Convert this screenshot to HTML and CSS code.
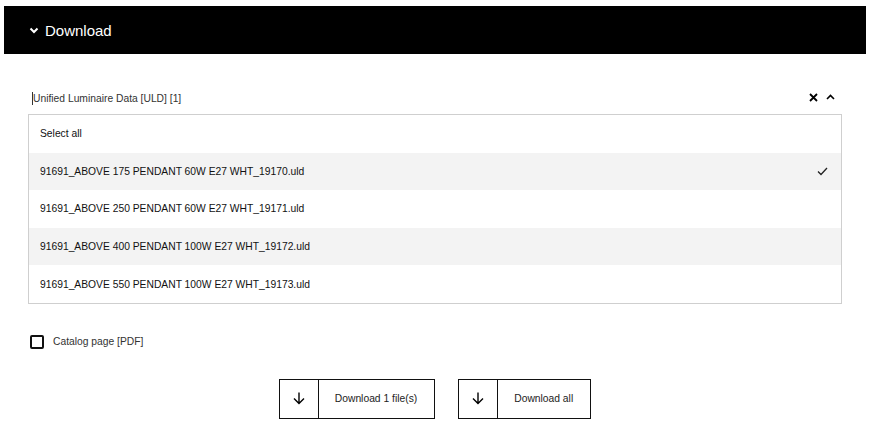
FILE: index.html
```html
<!DOCTYPE html>
<html lang="en">
  <head>
    <meta charset="UTF-8" />
    <title>Download</title>
    <link rel="stylesheet" href="styles.css">
  </head>
  <body>
    <div class="panel-head">
      <svg class="chev" width="10" height="7" viewBox="0 0 10 7"><path d="M1.5 1.5 L5 5 L8.5 1.5" fill="none" stroke="#fff" stroke-width="2"/></svg>
      Download
    </div>

    <div class="content">
      <div class="select-head">
        <span class="select-title"><span class="caret"></span>Unified Luminaire Data [ULD] [1]</span>
        <span class="select-icons">
          <svg width="9" height="9" viewBox="0 0 9 9"><path d="M1 1 L8 8 M8 1 L1 8" stroke="#000" stroke-width="1.8"/></svg>
          <svg width="9" height="6" viewBox="0 0 9 6"><path d="M1 5 L4.5 1.5 L8 5" fill="none" stroke="#000" stroke-width="1.6"/></svg>
        </span>
      </div>

      <div class="file-list">
        <div class="file-row">Select all</div>
        <div class="file-row shade">91691_ABOVE 175 PENDANT 60W E27 WHT_19170.uld
          <svg class="tick" width="11" height="9" viewBox="0 0 11 9"><path d="M1 4.5 L4 7.5 L10 1" fill="none" stroke="#222" stroke-width="1.3"/></svg>
        </div>
        <div class="file-row">91691_ABOVE 250 PENDANT 60W E27 WHT_19171.uld</div>
        <div class="file-row shade">91691_ABOVE 400 PENDANT 100W E27 WHT_19172.uld</div>
        <div class="file-row">91691_ABOVE 550 PENDANT 100W E27 WHT_19173.uld</div>
      </div>

      <label class="check">
        <span class="box"></span>
        Catalog page [PDF]
      </label>

      <div class="actions">
        <div class="btn">
          <span class="btn-icon"><svg width="12" height="13" viewBox="0 0 12 13"><path d="M6 0.5 V11.5 M1 6.5 L6 11.5 L11 6.5" fill="none" stroke="#000" stroke-width="1.4"/></svg></span>
          <span class="btn-label">Download 1 file(s)</span>
        </div>
        <div class="btn">
          <span class="btn-icon"><svg width="12" height="13" viewBox="0 0 12 13"><path d="M6 0.5 V11.5 M1 6.5 L6 11.5 L11 6.5" fill="none" stroke="#000" stroke-width="1.4"/></svg></span>
          <span class="btn-label">Download all</span>
        </div>
      </div>
    </div>
  </body>
</html>
```

FILE: styles.css
```css
body {
  margin: 0;
  font-family: "Liberation Sans", Arial, sans-serif;
  background: #fff;
  color: #222;
}

.panel-head {
  margin: 6px 3px 0 4px;
  height: 48px;
  background: #000;
  color: #fff;
  font-size: 15px;
  display: flex;
  align-items: center;
  padding-left: 25px;
  gap: 6px;
}

.chev {
  margin-top: 1px;
}

.content {
  padding: 0 27px 0 28px;
}

.select-head {
  display: flex;
  justify-content: space-between;
  align-items: center;
  height: 32px;
  margin-top: 28px;
  padding: 0 7px 0 4px;
}

.select-title {
  font-size: 10.3px;
  color: #333;
  display: flex;
  align-items: center;
}

.caret {
  width: 1px;
  height: 13px;
  background: #333;
}

.select-icons {
  display: flex;
  align-items: center;
  gap: 8px;
  margin-top: -2px;
}

.file-list {
  border: 1px solid #cfcfcf;
}

.file-row {
  height: 37.6px;
  display: flex;
  align-items: center;
  justify-content: space-between;
  padding: 0 13px 0 11px;
  font-size: 10.3px;
  color: #111;
}

.file-row.shade {
  background: #f3f3f3;
}

.check {
  display: flex;
  align-items: center;
  gap: 9px;
  margin-top: 31px;
  padding-left: 2px;
  font-size: 10.3px;
  color: #333;
}

.box {
  width: 10px;
  height: 10px;
  border: 2px solid #111;
  border-radius: 2px;
}

.actions {
  display: flex;
  justify-content: center;
  gap: 23px;
  margin-top: 30px;
}

.btn {
  display: flex;
  height: 38px;
  border: 1px solid #111;
  font-size: 10.3px;
  color: #222;
}

.btn-icon {
  width: 38px;
  border-right: 1px solid #111;
  display: flex;
  align-items: center;
  justify-content: center;
}

.btn-label {
  display: flex;
  align-items: center;
  padding: 0 17px 0 16px;
  white-space: nowrap;
}
```
